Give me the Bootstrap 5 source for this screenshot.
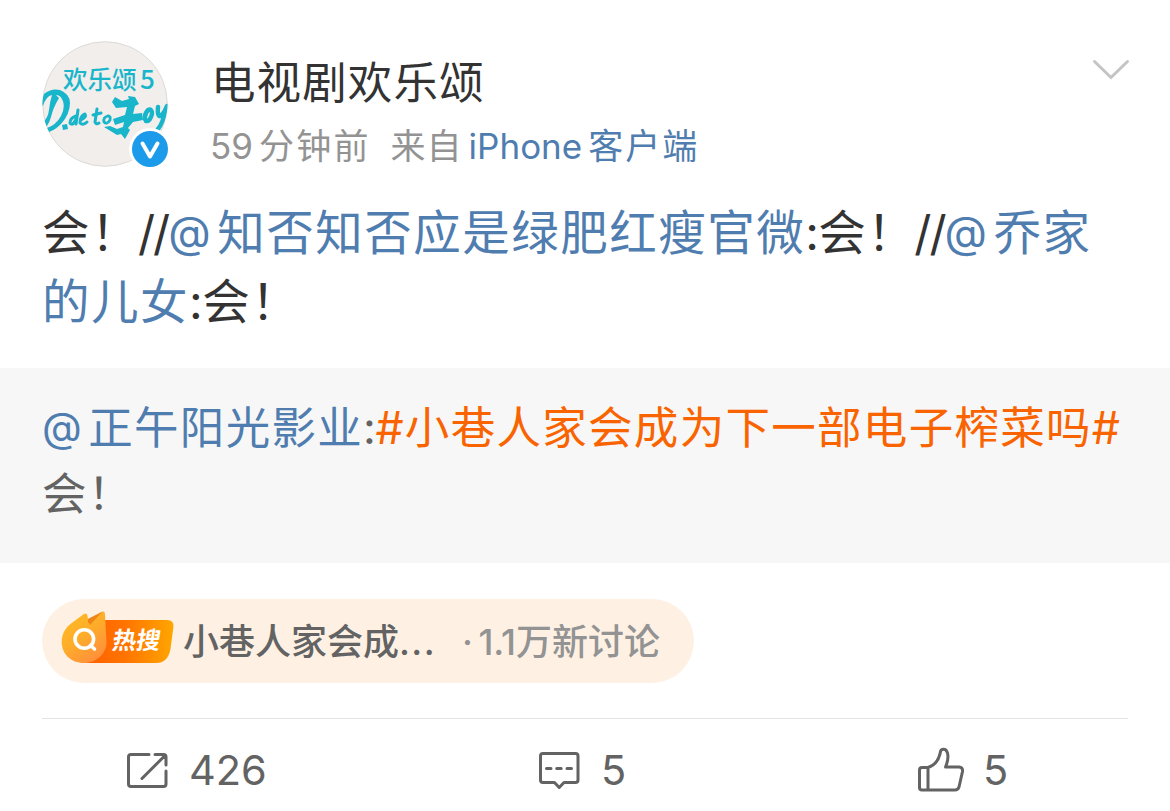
<!DOCTYPE html>
<html lang="zh-CN">
  <head>
    <meta charset="UTF-8" />
    <meta name="viewport" content="width=device-width, initial-scale=1" />
    <title>微博</title>
    <link
      href="https://cdn.jsdelivr.net/npm/bootstrap@5.3.2/dist/css/bootstrap.min.css"
      rel="stylesheet"
    />
    <style>
      body {
        font-family: Inter, "Noto Sans CJK SC", sans-serif;
        color: #333;
        background: #fff;
        overflow: hidden;
      }

      svg {
        display: block;
        flex: none;
        overflow: visible;
      }

      .post-head {
        height: 198px;
        padding: 41px 39px 0 42px;
      }

      .avatar {
        width: 126px;
        height: 126px;
        margin-right: 43px;
      }

      .author {
        font-size: 44.5px;
        line-height: 60px;
        letter-spacing: 1.1px;
        margin-top: 12px;
      }

      .meta {
        font-size: 35px;
        line-height: 50px;
        color: #939393;
        margin-top: 8px;
      }

      .mins {
        margin-left: -1px;
        margin-right: 6px;
      }

      .ago {
        letter-spacing: 2.2px;
        margin-right: 20px;
      }

      .from {
        letter-spacing: 1px;
        margin-right: 6px;
      }

      .device {
        margin-right: 6px;
      }

      .client {
        letter-spacing: 2px;
      }

      .link-blue {
        color: #507daf;
      }

      .post-text {
        height: 170px;
        padding-left: 42px;
        font-size: 47.5px;
        line-height: 69px;
        letter-spacing: 1.5px;
      }

      .at-sign {
        font-size: 0.925em;
        line-height: 0;
        letter-spacing: 6.5px;
        vertical-align: 2px;
      }

      .slashes {
        letter-spacing: -2px;
        margin: 0 0 0 -2px;
      }

      .colon {
        letter-spacing: -0.5px;
      }

      .quote {
        height: 195px;
        padding: 27px 0 0 42px;
        background: #f7f7f7;
        color: #636363;
        font-size: 44.5px;
        line-height: 66px;
        letter-spacing: 1.3px;
      }

      .topic {
        color: #f96400;
      }

      .hot-pill {
        width: 652px;
        height: 84px;
        margin: 36px 0 0 42px;
        padding-left: 19px;
        background: #fef1e4;
        font-size: 36px;
        font-weight: 500;
        color: #636363;
      }

      .hot-pill span {
        padding-top: 2px;
      }

      .hot-topic {
        margin-left: 9px;
      }

      .dots {
        letter-spacing: 1.4px;
      }

      .hot-count {
        color: #939393;
        margin-left: 26px;
      }

      .hot-sep {
        letter-spacing: 5.5px;
      }

      .divider {
        margin: 35px 42px 0;
        border-top: 1px solid #e3e3e3;
      }

      .actions {
        height: 92px;
        padding-top: 22px;
        color: #636363;
        font-size: 41.5px;
        line-height: 58px;
      }

      .actions svg {
        fill: none;
        stroke: #636363;
        stroke-width: 3;
        stroke-linecap: round;
        stroke-linejoin: round;
      }

      .act-share {
        padding-left: 125px;
      }

      .act-comment {
        padding-left: 147px;
      }

      .act-like {
        padding-left: 136px;
      }
    </style>
  </head>
  <body>
    <header class="post-head d-flex align-items-start">
      <svg class="avatar" viewBox="0 0 126 126">
        <defs>
          <clipPath id="face"><circle cx="63" cy="63" r="62.5" /></clipPath>
        </defs>
        <circle cx="63" cy="63" r="62.3" fill="#f1eeeb" stroke="#ddd9d6" />
        <g fill="#18b5cb" font-weight="500">
          <text x="21" y="48" font-size="24.5">欢乐颂</text>
          <text x="98" y="48" font-size="26" font-family="Noto Sans CJK SC">5</text>
        </g>
        <!-- brush lettering -->
        <g clip-path="url(#face)">
          <g fill="#18b5cb">
            <path d="M-1 63L2 53Q9 47 18 49Q28 53 28 62Q28 73 19 83Q11 91 3 92L5 87Q14 84 19 75Q24 65 20 58Q18 54 14 54L17 57Q11 67 9 76Q6 86 1 88L1 81Q6 77 7 69Q8 60 10 54Q4 55 1 65Z" />
            <path d="M70 61L73 56L80 60L87 58L86 55L93 56L97 63L93 65L91 73L100 72L101 79L91 81L86 87L88 89L83 98L79 93L75 94L62 86L68 85L75 88L81 86L82 81L73 84L71 78L83 74L85 66L74 67Z" />
            <path d="M20 84L25 83L26 88L21 89Z" />
          </g>
          <g fill="none" stroke="#18b5cb" stroke-linecap="round" stroke-linejoin="round">
            <path d="M34 75Q28 77 28 82Q31 86 35 76L36 69L34 83M39 79Q45 76 43 73Q38 75 38 82Q41 85 45 81M55 68L53 81Q54 84 57 82M51 74L59 72" stroke-width="3" />
            <path d="M66 75Q61 76 62 81Q65 84 68 79Q69 75 66 75" stroke-width="2.8" />
            <path d="M106 69Q101 75 104 80Q108 81 110 73Q110 67 106 69M116 66Q115 76 119 75Q123 71 125 65M123 70Q121 82 116 88" stroke-width="4.4" />
          </g>
        </g>
        <circle cx="108" cy="108" r="21" fill="#fff" />
        <circle cx="108" cy="108" r="18" fill="#1b9bea" />
        <path d="M100.500 102.500L108 115.500L115.500 102.500" fill="none" stroke="#fff" stroke-width="4" stroke-linecap="round" stroke-linejoin="round" />
      </svg>
      <div class="flex-grow-1">
        <div class="author">电视剧欢乐颂</div>
        <div class="meta d-flex">
          <span class="mins">59</span>
          <span class="ago">分钟前</span>
          <span class="from">来自</span>
          <span class="link-blue device">iPhone</span>
          <span class="link-blue client">客户端</span>
        </div>
      </div>
      <svg class="mt-3" width="38" height="26" viewBox="0 0 38 26" fill="none" stroke="#c4c4c4" stroke-width="3" stroke-linecap="round">
        <path d="M1.5 4.5L18 20.5L34.5 4.5" />
      </svg>
    </header>

    <main>
      <div class="post-text text-nowrap">
        会！<span class="slashes">//</span><span class="link-blue"><span class="at-sign">@</span>知否知否应是绿肥红瘦官微</span><span class="colon">:</span>会！<span class="slashes">//</span><span class="link-blue"><span class="at-sign">@</span>乔家<br />的儿女</span><span class="colon">:</span>会！
      </div>
      <div class="quote text-nowrap">
        <span class="link-blue"><span class="at-sign">@</span>正午阳光影业</span><span class="colon">:</span><span class="topic">#小巷人家会成为下一部电子榨菜吗#</span><br />会！
      </div>
      <div class="hot-pill rounded-pill d-flex align-items-center text-nowrap">
        <svg width="113" height="62" viewBox="0 0 113 62">
          <defs>
            <linearGradient id="tag">
              <stop offset="0.1" stop-color="#ff6500" />
              <stop offset="0.45" stop-color="#ff7300" />
              <stop offset="1" stop-color="#ffa600" />
            </linearGradient>
            <linearGradient id="flame" x1="0" y1="0" x2="0.7" y2="1">
              <stop offset="0" stop-color="#ffbd26" />
              <stop offset="0.5" stop-color="#feae28" />
              <stop offset="1" stop-color="#ff8f3c" />
            </linearGradient>
          </defs>
          <path d="M23 10H106Q113 10 112.400 17L109.500 39Q107 53 95 53H23Z" fill="url(#tag)" />
          <path d="M0.700 32C0.700 23 5 17.500 10 13.500L22.500 4.300Q26 2 26.500 6L27.500 13L40.500 2Q44 0 44 5L45.500 32C45.500 44 35 53 23 53C10 53 0.700 44 0.700 32Z" fill="url(#flame)" />
          <path d="M26.800 9L41.500 1.600L29 15Z" fill="#ee8517" />
          <g fill="none" stroke="#fff" stroke-width="3.600" stroke-linecap="round">
            <circle cx="23.300" cy="29" r="9.300" />
            <path d="M29.500 35.500L33.500 39" />
          </g>
          <text x="56.500" y="39" font-size="24" font-weight="700" fill="#fff" transform="skewX(-9)">热搜</text>
        </svg>
        <span class="hot-topic">小巷人家会成<span class="dots">...</span></span>
        <span class="hot-count"><span class="hot-sep">·</span>1.1万新讨论</span>
      </div>
    </main>

    <div class="divider"></div>

    <footer class="actions row g-0">
      <div class="col-4 d-flex act-share">
        <svg width="64" height="60" viewBox="0 0 64 60">
          <path d="M24 13.500H6Q3.500 13.500 3.500 16V43Q3.500 45.500 6 45.500H38.500Q41 45.500 41 43V30M30 13.500H38.500Q41 13.500 41 16V24M40 14.500L17 37.500" />
        </svg>
        <span>426</span>
      </div>
      <div class="col-4 d-flex act-comment">
        <svg width="64" height="60" viewBox="0 0 64 60">
          <path d="M6 12.500H38.500Q41 12.500 41 15V39Q41 41.500 38.500 41.500H27L22.200 46.500L17.500 41.500H6Q3.500 41.500 3.500 39V15Q3.500 12.500 6 12.500Z" />
          <path d="M9.500 27.500h4.500M19.700 27.500h4.500M30 27.500h4.500" />
        </svg>
        <span>5</span>
      </div>
      <div class="col-4 d-flex act-like">
        <svg width="67" height="60" viewBox="0 0 67 60">
          <path d="M12 26.500H6Q3.500 26.500 3.500 29V46.500Q3.500 49 6 49H39Q42 49 43 46L46.500 30.500Q47 26.500 43 26H29.500Q33 18 31.500 12Q30 7 26 8.500Q24.500 9 24 13Q21 24 12 26.500V49" />
        </svg>
        <span>5</span>
      </div>
    </footer>
  </body>
</html>
